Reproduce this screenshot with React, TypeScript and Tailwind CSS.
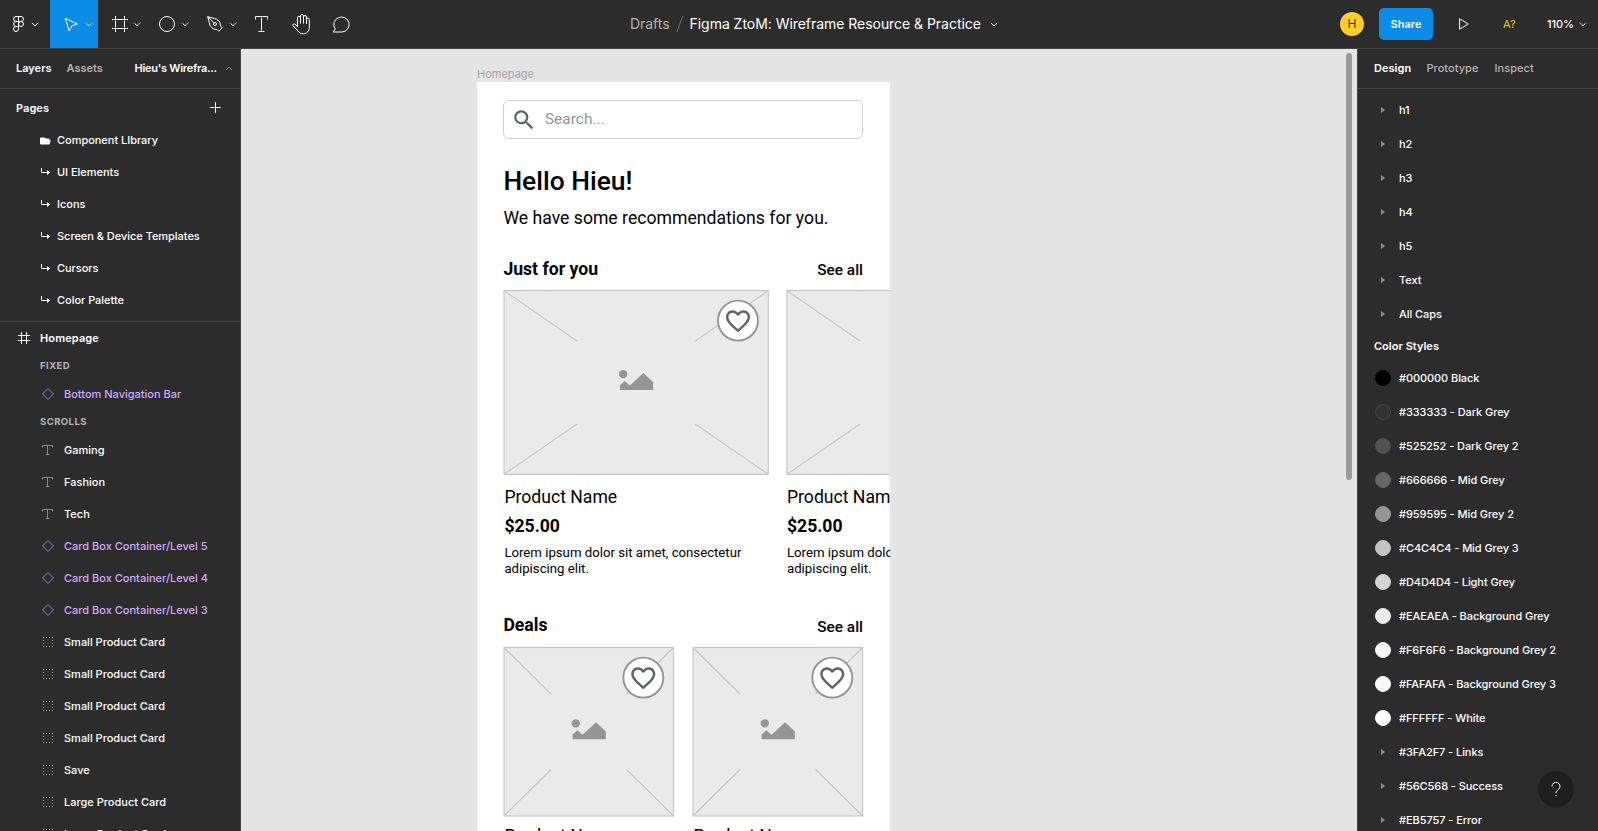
import type { ReactNode } from "react";

const pages = ["UI Elements", "Icons", "Screen & Device Templates", "Cursors", "Color Palette"];

type Kind = "component" | "text" | "group";
const layers: { kind: Kind; name: string }[] = [
  { kind: "text", name: "Gaming" },
  { kind: "text", name: "Fashion" },
  { kind: "text", name: "Tech" },
  { kind: "component", name: "Card Box Container/Level 5" },
  { kind: "component", name: "Card Box Container/Level 4" },
  { kind: "component", name: "Card Box Container/Level 3" },
  { kind: "group", name: "Small Product Card" },
  { kind: "group", name: "Small Product Card" },
  { kind: "group", name: "Small Product Card" },
  { kind: "group", name: "Small Product Card" },
  { kind: "group", name: "Save" },
  { kind: "group", name: "Large Product Card" },
  { kind: "group", name: "Large Product Card" },
];

const textStyles = ["h1", "h2", "h3", "h4", "h5", "Text", "All Caps"];
const swatches = [
  { name: "#000000 Black", color: "#000000" },
  { name: "#333333 - Dark Grey", color: "#333333" },
  { name: "#525252 - Dark Grey 2", color: "#525252" },
  { name: "#666666 - Mid Grey", color: "#666666" },
  { name: "#959595 - Mid Grey 2", color: "#959595" },
  { name: "#C4C4C4 - Mid Grey 3", color: "#C4C4C4" },
  { name: "#D4D4D4 - Light Grey", color: "#D4D4D4" },
  { name: "#EAEAEA - Background Grey", color: "#EAEAEA" },
  { name: "#F6F6F6 - Background Grey 2", color: "#F6F6F6" },
  { name: "#FAFAFA - Background Grey 3", color: "#FAFAFA" },
  { name: "#FFFFFF - White", color: "#FFFFFF" },
];
const colorFolders = ["#3FA2F7 - Links", "#56C568 - Success", "#EB5757 - Error"];

function Chevron({ className = "" }: { className?: string }) {
  return (
    <svg width="8" height="5" viewBox="0 0 8 5" fill="none" stroke="currentColor" className={className}>
      <path d="M1 .9 4 3.9 7 .9" />
    </svg>
  );
}

function Tool({ children, width, active }: { children: ReactNode; width: string; active?: boolean }) {
  return (
    <div className={`flex h-12 shrink-0 items-center ${width} ${active ? "bg-[#0c8ce9]" : ""}`}>{children}</div>
  );
}

function FrameIcon({ size, className = "" }: { size: number; className?: string }) {
  return (
    <svg width={size} height={size} viewBox={`0 0 ${size} ${size}`} stroke="currentColor" fill="none" className={className}>
      {size === 16 ? <path d="M3.5 0v16M12.5 0v16M0 3.5h16M0 12.5h16" /> : <path d="M3.5 0v12M8.5 0v12M0 3.5h12M0 8.5h12" />}
    </svg>
  );
}

function Toolbar() {
  return (
    <header className="flex h-[49px] shrink-0 items-start border-b border-[#444] bg-[#2c2c2c] text-white">
      <div className="flex w-[600px]">
        <Tool width="w-[50px] pl-[13px]">
          <svg width="11" height="16" viewBox="0 0 11 16" fill="none" stroke="currentColor">
            <path d="M5.5.5H3a2.4 2.5 0 0 0 0 5h2.5zM5.5.5H8a2.4 2.5 0 0 1 0 5H5.5zM5.5 5.5H3a2.4 2.5 0 0 0 0 5h2.5zM5.5 10.500H3a2.5 2.5 0 1 0 2.500 2.500z" />
            <circle cx="8" cy="8" r="2.500" />
          </svg>
          <Chevron className="ml-[7px]" />
        </Tool>
        <Tool width="w-12 pl-[14px]" active>
          <svg width="15" height="16" viewBox="0 0 15 16" fill="none" stroke="currentColor" className="mt-px">
            <path d="M1.300 1.300 13.200 7 7.900 8.900 5.100 13.900z" />
          </svg>
          <Chevron className="ml-[6px]" />
        </Tool>
        <Tool width="w-12 pl-[14px]">
          <FrameIcon size={16} />
          <Chevron className="ml-[5px]" />
        </Tool>
        <Tool width="w-12 pl-[13px]">
          <svg width="16" height="16" viewBox="0 0 16 16" fill="none" stroke="currentColor">
            <circle cx="8" cy="8" r="7.500" />
          </svg>
          <Chevron className="ml-[6px]" />
        </Tool>
        <Tool width="w-12 pl-[13px]">
          <svg width="16" height="16" viewBox="0 0 16 16" fill="none" stroke="currentColor">
            <path d="M.7.7 9.500 3.100 13 6.300 13.400 9.900 15.300 11.800 11.800 15.300 9.900 13.400 6.300 13 3.100 9.500zM.7.7 6.900 6.900" strokeLinejoin="round" />
            <circle cx="8" cy="8" r="1.500" />
          </svg>
          <Chevron className="ml-[6px]" />
        </Tool>
        <Tool width="w-10 pl-[13px]">
          <svg width="13" height="16" viewBox="0 0 13 16" fill="none" stroke="currentColor">
            <path d="M.5 3.500V.5h12v3M6.500.5v15M3.500 15.500h6" />
          </svg>
        </Tool>
        <Tool width="w-10 pl-[10px]">
          <svg width="19" height="21" viewBox="0 0 19 21" fill="none" stroke="currentColor" strokeLinejoin="round" strokeLinecap="round">
            <path d="M5.500 12.500V3.800a1.500 1.500 0 0 1 3 0V9M8.500 9V2a1.500 1.500 0 0 1 3 0V9M11.500 9V3a1.500 1.500 0 0 1 3 0V9.500M14.500 9.500V5.500a1.400 1.400 0 0 1 2.800 0v7.500c0 4.300-2.400 6.800-6 6.800-2.800 0-4.400-1.100-5.700-3.300L.9 11.500c-.5-1.200.9-2.200 2.100-1.300L5.500 12.500" />
          </svg>
        </Tool>
        <Tool width="w-10 pl-[10px]">
          <svg width="19" height="17" viewBox="0 0 19 17" fill="none" stroke="currentColor">
            <path d="M1.200 16 3.300 13A7.700 7.500 0 1 1 10 16z" strokeLinejoin="round" />
          </svg>
        </Tool>
      </div>
      <div className="flex h-[47px] grow items-center pl-[30px] text-[14px] tracking-[-0.04px]">
        <span className="text-[#b3b3b3]">Drafts</span>
        <svg width="8" height="16" viewBox="0 0 8 16" stroke="#6f6f6f" fill="none" className="ml-[6px] mr-[6px]">
          <path d="M.8 16 6.800 0" />
        </svg>
        <span>Figma ZtoM: Wireframe Resource &amp; Practice</span>
        <Chevron className="ml-[9px] mt-[2px]" />
      </div>
      <div className="flex h-12 w-[258px] shrink-0 items-center text-[11px] font-medium">
        <span className="flex size-6 items-center justify-center rounded-full bg-[#ffcd29] text-[12px] font-normal text-black/80">H</span>
        <span className="ml-[15px] flex h-8 w-[54px] items-center justify-center rounded-[5px] bg-[#0c8ce9] font-semibold">Share</span>
        <svg width="11" height="14" viewBox="0 0 11 14" fill="none" stroke="currentColor" className="ml-[26px]">
          <path d="M.6 1.800v10.400L9.300 7z" />
        </svg>
        <span className="ml-[33px] w-[44px] font-normal tracking-[0.2px] text-[#f5c526]">A?</span>
        <span className="tracking-[-0.1px]">110%</span>
        <Chevron className="ml-[5px]" />
      </div>
    </header>
  );
}

function LayerIcon({ kind }: { kind: Kind }) {
  if (kind === "component")
    return (
      <svg width="12" height="12" viewBox="0 0 12 12" fill="none" stroke="#71618c" strokeWidth="1.100">
        <path d="M6 .6 11.400 6 6 11.400.6 6z" />
      </svg>
    );
  if (kind === "text")
    return (
      <svg width="12" height="12" viewBox="0 0 12 12" fill="none" stroke="#8a8a8a">
        <path d="M.5 3.500v-2h10v2M5.500 1.500v9M3.500 10.500h4" />
      </svg>
    );
  return (
    <svg width="12" height="12" viewBox="0 0 12 12" fill="none" stroke="#a0a0a0">
      <path d="M1 1.500h1M4 1.500h1M7 1.500h1M10 1.500h1M1 10.500h1M4 10.500h1M7 10.500h1M10 10.500h1M1.500 4v1M1.500 7v1M10.500 4v1M10.500 7v1" />
    </svg>
  );
}

function LayerRow({ kind, name }: { kind: Kind; name: string }) {
  return (
    <div className={`flex h-8 shrink-0 items-center gap-[10px] pl-[42px] ${kind === "component" ? "text-[#d1a8ff]" : "text-white"}`}>
      <LayerIcon kind={kind} />
      <span>{name}</span>
    </div>
  );
}

function SectionLabel({ children }: { children: ReactNode }) {
  return <div className="flex h-6 shrink-0 items-center pl-10 text-[9.500px] font-bold tracking-[0.450px] text-[#b3b3b3]">{children}</div>;
}

function LeftPanel() {
  return (
    <aside className="flex w-[241px] shrink-0 flex-col overflow-hidden border-r border-[#444] bg-[#2c2c2c] text-[11px] font-medium text-white">
      <div className="flex h-10 shrink-0 items-center border-b border-[#444] pl-4 font-semibold">
        <span className="w-[50.500px]">Layers</span>
        <span className="w-[68px] text-[#b3b3b3]">Assets</span>
        <span className="w-[90px] tracking-[-0.270px]">Hieu's Wirefra...</span>
        <Chevron className="-mt-px rotate-180 text-[#8a8a8a]" />
      </div>
      <div className="flex h-[35px] shrink-0 items-center justify-between pl-4 pr-[19px] pt-[3px] font-semibold tracking-[0.055px]">
        <span>Pages</span>
        <svg width="11" height="11" viewBox="0 0 11 11" stroke="currentColor" className="mb-[2px]">
          <path d="M5.500 0v11M0 5.500h11" />
        </svg>
      </div>
      <div className="flex h-[198px] shrink-0 flex-col border-b border-[#444] tracking-[-0.030px]">
        <div className="flex h-8 items-center pl-10">
          <svg width="11" height="8" viewBox="0 0 11 8" fill="currentColor" className="mr-[6px] mt-px">
            <path d="M0 1.500Q0 .5 1 .5h3.500L6 1.500h2.500q1 0 1 1V3h.5q.8 0 .6.8L9.800 7q-.2.5-.8.5H1Q0 7.500 0 6.500z" />
          </svg>
          <span>Component LIbrary</span>
        </div>
        {pages.map((p) => (
          <div key={p} className="flex h-8 items-center pl-10">
            <svg width="11" height="8" viewBox="0 0 11 8" className="mr-[6px]">
              <path d="M1.500 0v4.500H8" fill="none" stroke="currentColor" />
              <path d="M7 2v5l3.200-2.500z" fill="currentColor" />
            </svg>
            <span>{p}</span>
          </div>
        ))}
      </div>
      <div className="flex h-8 shrink-0 items-center gap-[10px] pl-[18px] font-semibold tracking-[0.120px]">
        <FrameIcon size={12} />
        <span>Homepage</span>
      </div>
      <SectionLabel>FIXED</SectionLabel>
      <LayerRow kind="component" name="Bottom Navigation Bar" />
      <SectionLabel>SCROLLS</SectionLabel>
      {layers.map((l, i) => (
        <LayerRow key={i} kind={l.kind} name={l.name} />
      ))}
    </aside>
  );
}

function FolderRow({ name }: { name: string }) {
  return (
    <div className="flex h-[34px] shrink-0 items-center pl-[23px]">
      <svg width="4" height="6" viewBox="0 0 4 6" fill="#8f8f8f" className="mr-[14px]">
        <path d="M0 0v6l4-3z" />
      </svg>
      <span>{name}</span>
    </div>
  );
}

function RightPanel() {
  return (
    <aside className="relative flex w-[241px] shrink-0 flex-col overflow-hidden border-l border-[#444] bg-[#2c2c2c] text-[11px] font-medium tracking-[-0.070px] text-white">
      <div className="flex h-10 shrink-0 items-center border-b border-[#444] pl-4 tracking-[0.040px]">
        <span className="w-[52.500px] font-semibold">Design</span>
        <span className="w-[68px] text-[#b3b3b3]">Prototype</span>
        <span className="text-[#b3b3b3]">Inspect</span>
      </div>
      <div className="flex flex-col pt-1">
        {textStyles.map((t) => (
          <FolderRow key={t} name={t} />
        ))}
        <div className="flex h-[30px] shrink-0 items-center pl-4 font-semibold tracking-[0.020px]">Color Styles</div>
        {swatches.map((s) => (
          <div key={s.name} className="flex h-[34px] shrink-0 items-center gap-2 pl-[17px]">
            <span className="size-4 rounded-full border border-white/10" style={{ backgroundColor: s.color, borderColor: s.color === "#333333" ? "#444444" : s.color }} />
            <span>{s.name}</span>
          </div>
        ))}
        {colorFolders.map((t) => (
          <FolderRow key={t} name={t} />
        ))}
      </div>
      <div className="absolute bottom-6 right-6 flex size-9 items-center justify-center rounded-full bg-[#1e1e1e]">
        <svg width="10" height="15" viewBox="0 0 10 15" fill="none" stroke="currentColor">
          <path d="M1 4.500a4 4 0 1 1 6.500 2.900C5.800 8.700 5 9.300 5 11" />
          <path d="M5 13v1.200" />
        </svg>
      </div>
    </aside>
  );
}

const HEART =
  "M16.500 3c-1.740 0-3.410.81-4.500 2.090C10.910 3.810 9.240 3 7.500 3 4.420 3 2 5.420 2 8.500c0 3.780 3.400 6.860 8.550 11.540L12 21.350l1.450-1.320C18.600 15.360 22 12.280 22 8.500 22 5.420 19.580 3 16.500 3zm-4.400 15.550l-.1.100-.1-.1C7.140 14.240 4 11.390 4 8.500 4 6.500 5.500 5 7.500 5c1.540 0 3.040.99 3.570 2.360h1.870C13.460 5.990 14.960 5 16.500 5c2 0 3.500 1.500 3.500 3.500 0 2.890-3.140 5.740-7.900 10.050z";

function Placeholder({ w, h, lx, ly }: { w: number; h: number; lx: number; ly: number }) {
  const hx = w - 30.8;
  const hy = 30.6;
  return (
    <svg width={w} height={h} viewBox={`-0.500 0 ${w} ${h}`} fill="none" className="block overflow-visible">
      <rect x=".5" y=".5" width={w - 1} height={h - 1} fill="#eaeaea" stroke="#c4c4c4" strokeWidth="1.100" />
      <path
        d={`M1 1 ${lx} ${ly}M${w - 1} 1 ${w - lx} ${ly}M1 ${h - 1} ${lx} ${h - ly}M${w - 1} ${h - 1} ${w - lx} ${h - ly}`}
        stroke="#c4c4c4"
        strokeWidth="1.100"
      />
      <g transform={`translate(${w / 2 - 17} ${h / 2 - 12.4})`} fill="#959595">
        <circle cx="4" cy="4" r="4.200" />
        <path d="M.8 15.200 5.500 10.900 10.800 15.400 24.200 3 34 12v8H.8z" />
      </g>
      <circle cx={hx} cy={hy} r="20" fill="#fff" stroke="#959595" strokeWidth="1.900" />
      <path transform={`translate(${hx - 14.4} ${hy - 13.9}) scale(1.200)`} d={HEART} fill="#5f6368" />
    </svg>
  );
}

function ProductCard({ large }: { large?: boolean }) {
  return (
    <div className={`shrink-0 ${large ? "w-[265px]" : "w-[170.600px]"}`}>
      {large ? <Placeholder w={265.3} h={185} lx={73.5} ly={51} /> : <Placeholder w={170.6} h={169.5} lx={47.5} ly={47} />}
      <div className="pl-[1px]">
        <div className={`h-6 text-[17.600px] leading-6 ${large ? "mt-[9.500px]" : "mt-[8px]"}`}>Product Name</div>
        <div className="mt-[5.500px] h-6 text-[17.600px] font-bold leading-6">$25.00</div>
        <p className="mt-[7px] text-[13.200px] leading-[16px]">
          Lorem ipsum dolor sit amet, consectetur
          <br />
          adipiscing elit.
        </p>
      </div>
    </div>
  );
}

function SectionHead({ title, linkPad }: { title: string; linkPad: string }) {
  return (
    <div className="flex h-6 shrink-0 items-start justify-between pr-[27px] leading-6">
      <span className="text-[17.600px] font-bold">{title}</span>
      <span className={`text-[15.400px] font-medium ${linkPad}`}>See all</span>
    </div>
  );
}

function Canvas() {
  return (
    <main className="flex min-w-0 grow bg-[#e5e5e5] pl-[236px]">
      <div className="flex w-[413px] shrink-0 flex-col">
        <div className="h-[33px] shrink-0 pt-[17px] text-[11px] leading-4 text-[#a3a3a3]">Homepage</div>
        <div className="flex grow flex-col overflow-hidden bg-white pl-[26.400px] font-['Roboto',sans-serif] text-black">
          <div className="mt-[18px] flex h-[39px] w-[360px] shrink-0 items-center rounded-[6px] border border-[#d0d0d0] pl-[7px]">
            <svg width="26" height="26" viewBox="0 0 24 24" fill="#5f6368">
              <path d="M15.500 14h-.79l-.28-.27A6.470 6.470 0 0 0 16 9.500 6.500 6.500 0 1 0 9.500 16c1.610 0 3.090-.59 4.230-1.570l.27.28v.79l5 4.990L20.490 19l-4.990-5zm-6 0C7.010 14 5 11.990 5 9.500S7.010 5 9.500 5 14 7.010 14 9.500 11.990 14 9.500 14z" />
            </svg>
            <span className="ml-[7.500px] pt-px text-[15.400px] tracking-[0.050px] text-[#959595]">Search...</span>
          </div>
          <h1 className="mt-[26px] h-8 shrink-0 text-[26.400px] font-medium leading-8">Hello Hieu!</h1>
          <p className="mb-[27px] mt-[9px] h-6 shrink-0 text-[17.600px] leading-6 tracking-[0.015px]">We have some recommendations for you.</p>
          <SectionHead title="Just for you" linkPad="pt-px" />
          <div className="mt-[9px] flex h-[323px] shrink-0 gap-[17.600px]">
            <ProductCard large />
            <ProductCard large />
          </div>
          <SectionHead title="Deals" linkPad="pt-[2px]" />
          <div className="mt-[9.500px] flex shrink-0 gap-[18.500px]">
            <ProductCard />
            <ProductCard />
          </div>
        </div>
      </div>
      <div className="flex grow justify-end pr-[5px] pt-[4px]">
        <div className="h-[427px] w-[6px] rounded-full bg-[#9b9b9b]" />
      </div>
    </main>
  );
}

export default function App() {
  return (
    <div className="flex h-[831px] w-[1598px] flex-col overflow-hidden font-['Inter',sans-serif]">
      <Toolbar />
      <div className="flex min-h-0 grow">
        <LeftPanel />
        <Canvas />
        <RightPanel />
      </div>
    </div>
  );
}
